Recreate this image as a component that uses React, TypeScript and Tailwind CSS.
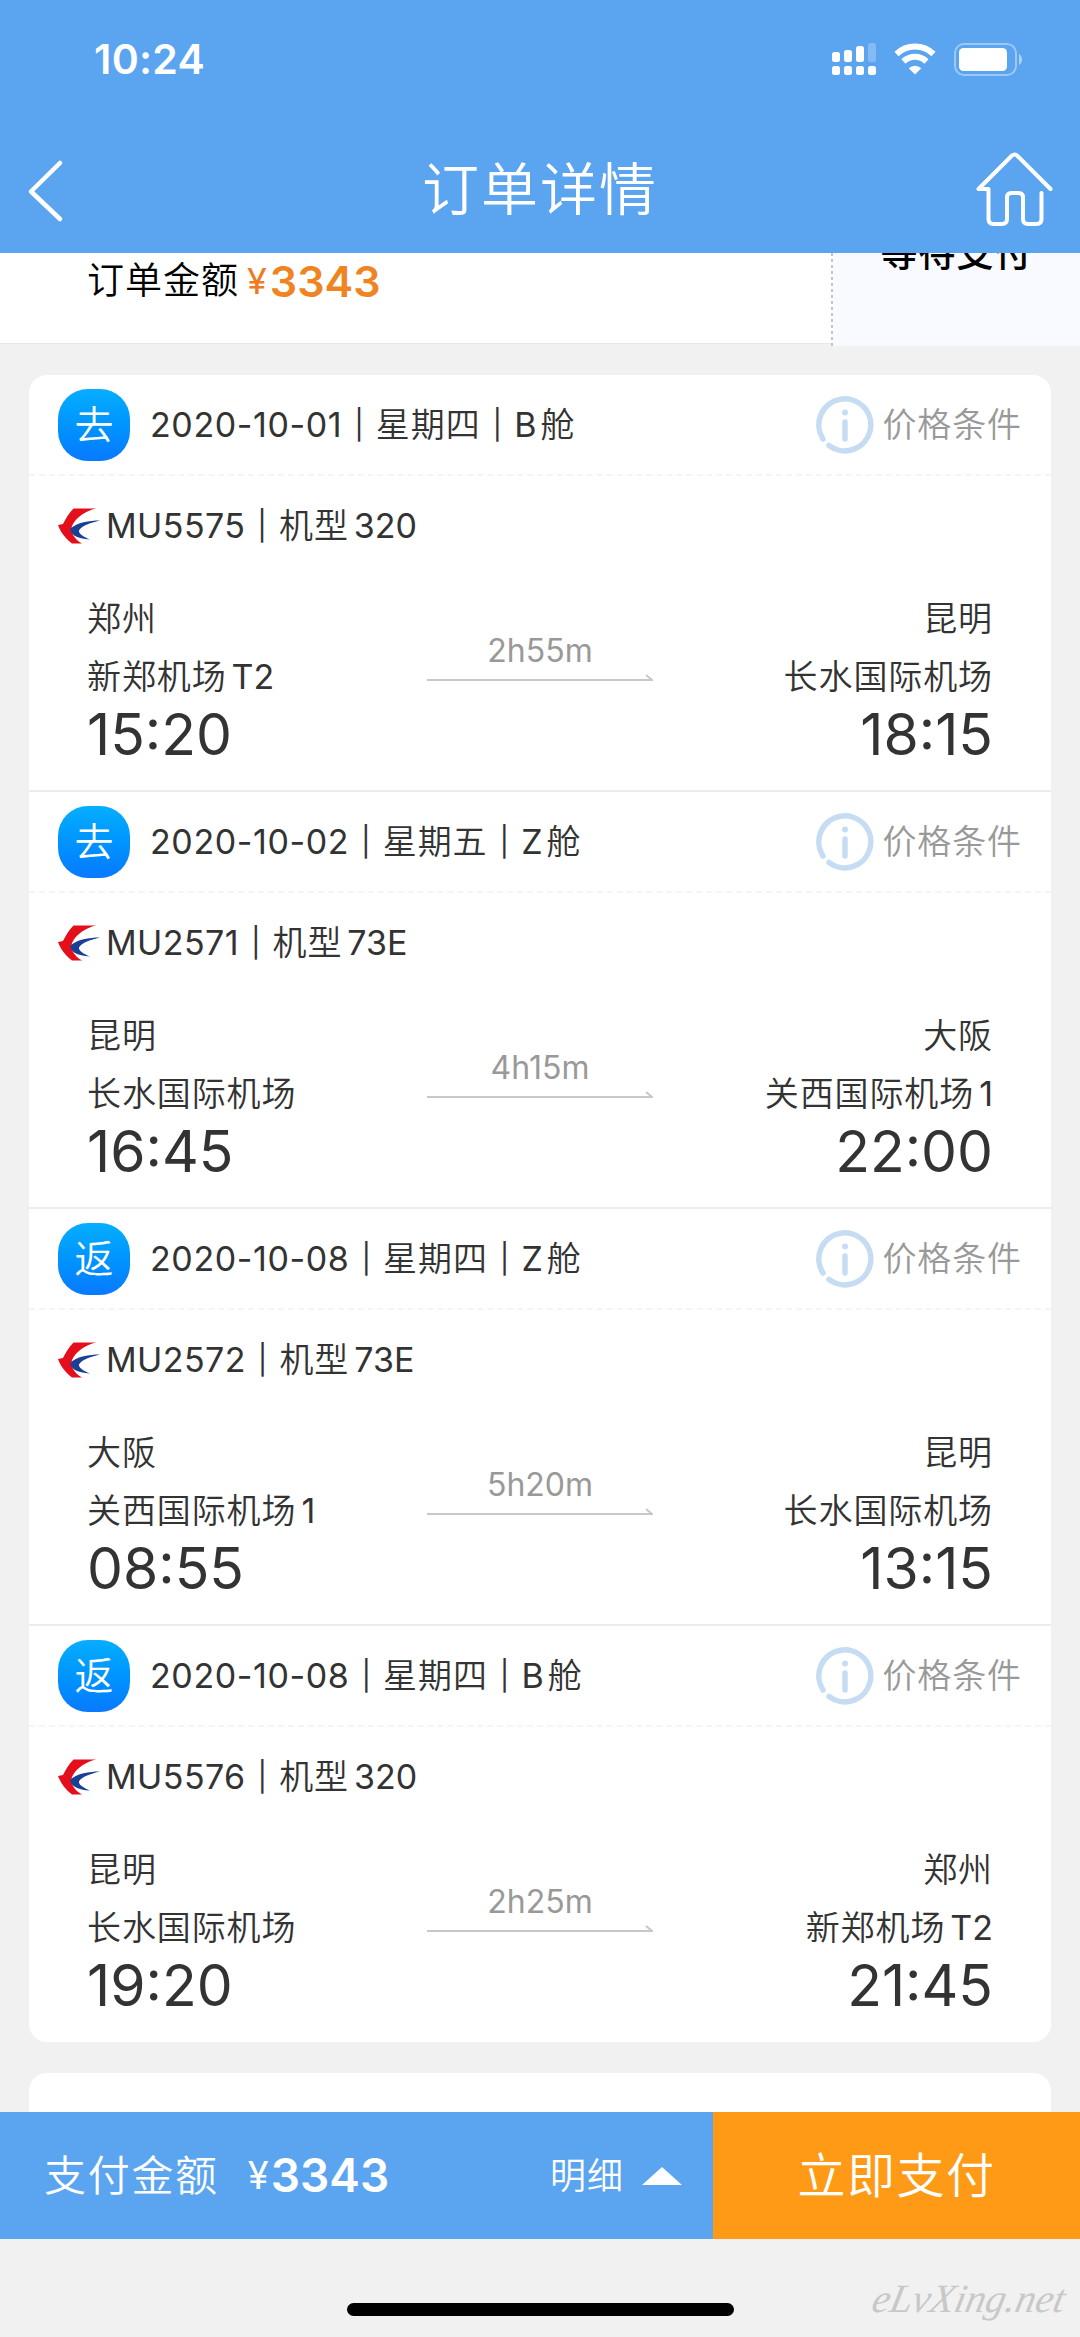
type Leg = {
  id: number;
  tag: string;
  date: string;
  weekday: string;
  cabin: string;
  flightNo: string;
  plane: string;
  duration: string;
  from: Stop;
  to: Stop;
};

type Stop = {
  city: string;
  airport: string;
  terminal?: string;
  time: string;
};

const legs: Leg[] = [
  {
    id: 1,
    tag: "去",
    date: "2020-10-01",
    weekday: "星期四",
    cabin: "B",
    flightNo: "MU5575",
    plane: "320",
    duration: "2h55m",
    from: { city: "郑州", airport: "新郑机场", terminal: "T2", time: "15:20" },
    to: { city: "昆明", airport: "长水国际机场", time: "18:15" },
  },
  {
    id: 2,
    tag: "去",
    date: "2020-10-02",
    weekday: "星期五",
    cabin: "Z",
    flightNo: "MU2571",
    plane: "73E",
    duration: "4h15m",
    from: { city: "昆明", airport: "长水国际机场", time: "16:45" },
    to: { city: "大阪", airport: "关西国际机场", terminal: "1", time: "22:00" },
  },
  {
    id: 3,
    tag: "返",
    date: "2020-10-08",
    weekday: "星期四",
    cabin: "Z",
    flightNo: "MU2572",
    plane: "73E",
    duration: "5h20m",
    from: { city: "大阪", airport: "关西国际机场", terminal: "1", time: "08:55" },
    to: { city: "昆明", airport: "长水国际机场", time: "13:15" },
  },
  {
    id: 4,
    tag: "返",
    date: "2020-10-08",
    weekday: "星期四",
    cabin: "B",
    flightNo: "MU5576",
    plane: "320",
    duration: "2h25m",
    from: { city: "昆明", airport: "长水国际机场", time: "19:20" },
    to: { city: "郑州", airport: "新郑机场", terminal: "T2", time: "21:45" },
  },
];

const StatusBar = () => (
  <div className="flex h-[118px] items-center justify-between pr-[57px] pl-[94px]">
    <span className="text-[41px] leading-none font-semibold tracking-[0.3px]">10:24</span>
    <div className="flex items-center gap-[18px]">
      <svg width="44" height="33" viewBox="0 0 44 33" fill="currentColor">
        <rect x="0" y="9" width="8" height="10" rx="2.5" />
        <rect x="12" y="7" width="8" height="12" rx="2.5" />
        <rect x="24" y="3" width="8" height="16" rx="2.5" />
        <rect x="36" y="0" width="8" height="19" rx="2.5" opacity="0.25" />
        <rect x="0" y="23" width="8" height="9" rx="2.5" />
        <rect x="12" y="23" width="8" height="9" rx="2.5" />
        <rect x="24" y="23" width="8" height="9" rx="2.5" />
        <rect x="36" y="23" width="8" height="9" rx="2.5" />
      </svg>
      <svg width="42" height="32" viewBox="0 0 42 32" fill="none">
        <path d="M2.5 11a26.5 26.5 0 0 1 37 0" stroke="currentColor" strokeWidth="6" />
        <path d="M9.5 18.5a16.5 16.5 0 0 1 23 0" stroke="currentColor" strokeWidth="6" />
        <path d="M21 31.5l-6.3-6.2a9 9 0 0 1 12.6 0z" fill="currentColor" />
      </svg>
      <svg width="69" height="33" viewBox="0 0 69 33" fill="none">
        <rect x="1" y="1" width="61" height="31" rx="9" stroke="currentColor" strokeWidth="2" opacity="0.4" />
        <rect x="5" y="5" width="48" height="23" rx="4.5" fill="currentColor" />
        <path d="M65 11c4 2 4 9 0 11z" fill="currentColor" opacity="0.5" />
      </svg>
    </div>
  </div>
);

const NavBar = () => (
  <div className="flex h-[135px] items-center justify-between pr-[27px] pl-[27px]">
    <svg width="77" height="64" viewBox="0 0 77 64" fill="none" className="mt-[11px]">
      <path d="M33 4L4 32.5L33 60" stroke="currentColor" strokeWidth="4.5" strokeLinecap="round" strokeLinejoin="round" />
    </svg>
    <h1 className="mt-[8px] text-[57px] leading-none font-[350] tracking-[2px]">订单详情</h1>
    <svg width="77" height="76" viewBox="0 0 77 76" fill="none" className="mt-[6px]">
      <path
        d="M74.5 38L41 4.5q-2.500-2-5 0L2.500 38H12.500V68q0 5 5 5H26q5 0 5-5V46.500q0-4.500 4.500-4.500h7q4.500 0 4.500 4.500V68q0 5 5 5h8.500q5 0 5-5V42"
        stroke="currentColor"
        strokeWidth="4"
        strokeLinecap="round"
        strokeLinejoin="round"
      />
    </svg>
  </div>
);

const AirlineLogo = () => (
  <svg width="42" height="36" viewBox="0 0 42 36" fill="none">
    <path d="M38 0.500C28 3 18 9 14 18C12 24 16 31 24 35.500H14C8 31 3 25 0 17L5 16C8 10 11 5 15.500 0.500Z" fill="#e50f1b" />
    <path d="M42 12.500C31 12.500 19 14.500 12.500 20.500C11.500 26 19 31 32 31.500C25 28.500 20.500 25.500 21 22.500C23 18 32 15 42 12.500Z" fill="#1b3f95" />
  </svg>
);

const InfoIcon = () => (
  <svg width="58" height="58" viewBox="0 0 58 58" fill="none" stroke="#c5dcf3" strokeLinecap="round">
    <path d="M7 43A26 26 0 1 1 13 49.500" strokeWidth="5.500" />
    <path d="M29 26v17" strokeWidth="5.500" />
    <path d="M29 16.500v0.100" strokeWidth="6" />
  </svg>
);

const Divider = () => <span className="mx-[12px] text-[29px] leading-none font-normal">|</span>;

const StopInfo = ({ stop, right }: { stop: Stop; right?: boolean }) => (
  <div className={right ? "flex w-[320px] flex-col items-end" : "flex w-[320px] flex-col items-start"}>
    <span className="h-[58px] leading-[58px] tracking-[0.9px]">{stop.city}</span>
    <span className="flex h-[58px] items-center gap-[5px] leading-[58px] whitespace-nowrap">
      <span className="tracking-[0.9px]">{stop.airport}</span>
      {stop.terminal && <span className="font-normal">{stop.terminal}</span>}
    </span>
    <span className="text-[57px] leading-[58px] font-normal">{stop.time}</span>
  </div>
);

const LegSection = ({ leg }: { leg: Leg }) => (
  <section className="h-[417px] border-b-2 border-[#ececec] text-[34px] font-[350] text-[#333] last:border-b-0">
    <div className="flex h-[101px] items-center justify-between border-b-2 border-dashed border-[#f5f5f5] pr-[29px] pl-[29px]">
      <div className="flex items-center">
        <span className="mr-[20px] flex size-[72px] items-center justify-center rounded-[30px] bg-linear-to-b from-[#08aeff] to-[#0a79ff] text-[39px] leading-none text-white">
          {leg.tag}
        </span>
        <span className="font-normal tracking-[0.6px]">{leg.date}</span>
        <Divider />
        <span className="tracking-[0.9px]">{leg.weekday}</span>
        <Divider />
        <span className="mr-[4px] font-normal">{leg.cabin}</span>
        <span>舱</span>
      </div>
      <div className="flex items-center gap-[8px] text-[#999]">
        <InfoIcon />
        <span className="tracking-[0.9px]">价格条件</span>
      </div>
    </div>
    <div className="flex h-[99px] items-center pl-[29px]">
      <AirlineLogo />
      <span className="ml-[6px] font-normal tracking-[0.4px]">{leg.flightNo}</span>
      <Divider />
      <span className="tracking-[0.9px]">机型</span>
      <span className="ml-[5px] font-normal">{leg.plane}</span>
    </div>
    <div className="flex justify-between px-[58px] pt-[15px]">
      <StopInfo stop={leg.from} />
      <div className="w-[226px] pt-[39px]">
        <p className="text-center text-[32px] leading-[44px] font-normal text-[#999]">{leg.duration}</p>
        <svg width="226" height="8" viewBox="0 0 226 8" fill="none" className="mt-px block">
          <path d="M0 6H225L219 1" stroke="#c8c8c8" strokeWidth="2" />
        </svg>
      </div>
      <StopInfo stop={leg.to} right />
    </div>
  </section>
);

const PayBar = () => (
  <footer className="flex h-[127px] text-white">
    <div className="flex flex-1 items-center bg-[#5ba4f0] pr-[31px] pl-[44px]">
      <span className="text-[42px] font-[350] tracking-[1.700px]">支付金额</span>
      <span className="ml-[29px] text-[38px] font-normal">¥</span>
      <span className="ml-[2px] text-[46px] font-semibold">3343</span>
      <span className="ml-auto text-[36px] font-[350] tracking-[1px]">明细</span>
      <svg width="40" height="18" viewBox="0 0 40 18" className="ml-[18px]">
        <path d="M20 0L40 18H0Z" fill="currentColor" />
      </svg>
    </div>
    <button className="w-[367px] bg-[#ff9a17] text-[48px] font-[350] tracking-[1.500px]">立即支付</button>
  </footer>
);

export default function App() {
  return (
    <div
      lang="zh-CN"
      className="flex h-[2337px] w-[1080px] flex-col overflow-hidden bg-[#f1f1f1] font-[Inter,'Noto_Sans_CJK_SC',sans-serif]"
    >
      <header className="h-[253px] shrink-0 bg-[#5ba4f0] text-white">
        <StatusBar />
        <NavBar />
      </header>

      <main className="h-[1859px] shrink-0 overflow-hidden">
        <div className="flex h-[93px]">
          <div className="flex h-[91px] flex-1 items-start border-b border-[#e8e8e8] bg-white pl-[87px]">
            <div className="flex h-[56px] items-center">
              <span className="text-[37px] font-[350] tracking-[1px] text-black">订单金额</span>
              <span className="ml-[8px] text-[36px] text-[#ee7a24]">¥</span>
              <span className="ml-[3px] text-[43px] font-semibold text-[#ee8522]">3343</span>
            </div>
          </div>
          <div className="w-[2px] bg-[repeating-linear-gradient(to_bottom,#c4c4cc_0_3px,#fff_3px_6px)]" />
          <div className="flex w-[247px] justify-center overflow-hidden bg-[#f8faff]">
            <span className="-mt-[29px] h-[60px] text-[37px] leading-[60px] font-medium tracking-[1px]">等待支付</span>
          </div>
        </div>

        <div className="flex flex-col gap-[31px] px-[29px] pt-[29px]">
          <div className="h-[1667px] overflow-hidden rounded-[18px] bg-white">
            {legs.map((leg) => (
              <LegSection key={leg.id} leg={leg} />
            ))}
          </div>
          <div className="h-[120px] rounded-[18px] bg-white" />
        </div>
      </main>

      <PayBar />

      <div className="relative flex flex-1 items-end justify-center pb-[21px]">
        <div className="h-[13px] w-[387px] rounded-full bg-black" />
        <span className="absolute right-[15px] bottom-[8px] -skew-x-12 font-['Liberation_Serif',serif] text-[40px] leading-[60px] text-[#c8c8c8] italic">
          eLvXing.net
        </span>
      </div>
    </div>
  );
}
